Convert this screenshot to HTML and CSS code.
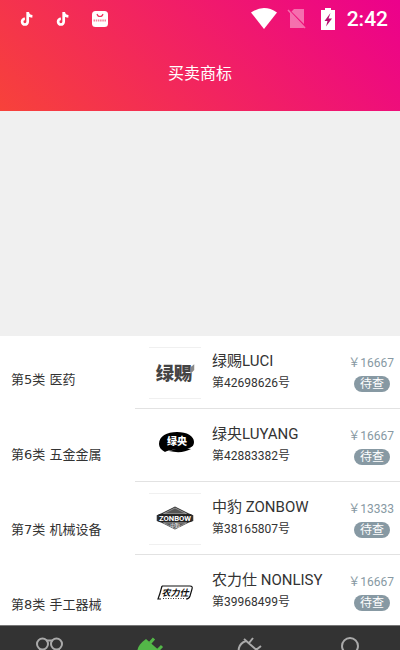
FILE: index.html
```
<!DOCTYPE html>
<html lang="zh-CN">
<head>
<meta charset="utf-8">
<meta name="viewport" content="width=device-width, initial-scale=1">
<title>买卖商标</title>
<link rel="stylesheet" href="styles.css">
</head>
<body>
<svg width="0" height="0" class="sprite" aria-hidden="true">
  <symbol id="note" viewBox="0 0 14 16"><path d="M7.700 1v9.700a2.800 2.800 0 1 1-2.800-2.800M7.700 1.200c.3 2.500 2.100 4 4.700 4.200" fill="none" stroke="#fff" stroke-width="2.700"/></symbol>
</svg>
<header class="header">
  <div class="status">
    <div class="status-left">
      <svg width="14" height="16"><use href="#note"/></svg>
      <svg width="14" height="16"><use href="#note"/></svg>
      <svg width="16" height="16" viewBox="0 0 16 16"><rect width="16" height="16" rx="3.500" fill="#fff"/><path d="M5 3c.8 3.400 5.200 3.400 6 0" fill="none" stroke="#f0305c" stroke-width="1.100"/><path d="M1.500 9.500h13" stroke="#f0305c" stroke-width="2.200" stroke-dasharray="1.500 .7" opacity=".6"/></svg>
    </div>
    <div class="status-right">
      <svg width="26" height="21" viewBox="0 0 26 21"><path d="M0 4.500Q13-4.300 26 4.500L13 21z" fill="#fff"/></svg>
      <svg class="sim" width="20" height="21" viewBox="0 0 20 21"><path d="M7 1h10v15L4.500 3.500zM3 5l14 15H3z" fill="#fff" opacity=".4"/><path d="M1 2l17 18" stroke="#fff" stroke-width="1.500" opacity=".4"/></svg>
      <svg width="14" height="22" viewBox="0 0 14 22"><path d="M4 0h6v2h4v20H0V2h4z" fill="#fff"/><path d="M9.500 5L3.500 13h3L5 18.500l6-8H7.500z" fill="#b80c70"/></svg>
      <span class="time">2:42</span>
    </div>
  </div>
  <h1 class="page-title">买卖商标</h1>
</header>
<main class="content">
  <div class="banner"></div>
  <div class="columns">
    <nav class="categories">
      <a href="#">第5类 医药</a>
      <a href="#">第6类 五金金属</a>
      <a href="#">第7类 机械设备</a>
      <a href="#">第8类 手工器械</a>
    </nav>
    <ul class="marks">
      <li class="mark">
        <svg class="logo framed" viewBox="0 0 52 52"><text x="25" y="33" text-anchor="middle" class="logo-wide">绿赐</text><path d="M42 20l4-3v6l-4 4z" fill="#888"/></svg>
        <div class="info"><h2>绿赐LUCI</h2><p>第42698626号</p></div>
        <div class="offer"><span class="price">￥16667</span><span class="tag">待查</span></div>
      </li>
      <li class="mark">
        <svg class="logo" viewBox="0 0 52 52"><path d="M10 24C10 16 18 12 28 12s17 4 17 10-6 7-13 7c-8 0-14 2-16 3-4-2-6-5-6-8zM20 31q12-4 22-2-9 5-22 2z" fill="#000"/><text x="28" y="25" text-anchor="middle" class="logo-oval">绿央</text></svg>
        <div class="info"><h2>绿央LUYANG</h2><p>第42883382号</p></div>
        <div class="offer"><span class="price">￥16667</span><span class="tag">待查</span></div>
      </li>
      <li class="mark">
        <svg class="logo framed" viewBox="0 0 52 52"><path d="M26 13L40 20l5 2v6l-5 2-14 7-14-7-5-2v-6l5-2z" fill="#333"/><path d="M26 14.500L38 20.500H14zM14 30h24L26 36z" fill="#555" stroke="#ccc" stroke-width=".6"/><rect x="9" y="21" width="34" height="8" fill="#222"/><text x="26" y="28.500" text-anchor="middle" class="logo-badge">ZONBOW</text><text x="26" y="34" text-anchor="middle" class="logo-small">中豹</text></svg>
        <div class="info"><h2>中豹 ZONBOW</h2><p>第38165807号</p></div>
        <div class="offer"><span class="price">￥13333</span><span class="tag">待查</span></div>
      </li>
      <li class="mark">
        <svg class="logo" viewBox="0 0 52 52"><path d="M13 20h28q3 0 2 3l-2 7q-1 3-4 3M13 20q-2 8-4 13h3" fill="none" stroke="#111" stroke-width="1.200"/><text x="26" y="30" text-anchor="middle" class="logo-slant">农力仕</text><path d="M14 32.500h22" stroke="#333" stroke-dasharray="1 1.500"/></svg>
        <div class="info"><h2>农力仕 NONLISY</h2><p>第39968499号</p></div>
        <div class="offer"><span class="price">￥16667</span><span class="tag">待查</span></div>
      </li>
    </ul>
  </div>
</main>
<nav class="tabs">
  <button type="button" aria-label="查询"><svg width="28" height="28" viewBox="0 0 28 28" fill="none" stroke="#aaa" stroke-width="2"><circle cx="6.500" cy="7" r="5.500"/><circle cx="20.500" cy="7" r="5.500"/><path d="M10 3.500h7M4 12l-1 8M23 12l1 8"/></svg></button>
  <button type="button" aria-label="买卖"><svg width="28" height="28" viewBox="0 0 28 28"><path d="M10 2l15 13c-4 7-14 10-20 6S0 9 10 2z" fill="#53b748"/><path d="M14 6l4-4.500M22 13l4-4" stroke="#53b748" stroke-width="3"/></svg></button>
  <button type="button" aria-label="服务"><svg width="28" height="28" viewBox="0 0 28 28" fill="none" stroke="#aaa" stroke-width="2"><path d="M8 2l16 14M10 4C2 7 1 14 5 19s12 3 16-5M13 6l4-5M20 13l5-4"/></svg></button>
  <button type="button" aria-label="我的"><svg width="28" height="28" viewBox="0 0 28 28" fill="none" stroke="#aaa" stroke-width="2"><circle cx="14" cy="9" r="8"/><path d="M4 27c0-6 4-9 10-9s10 3 10 9"/></svg></button>
</nav>
</body>
</html>
```
FILE: styles.css
```
* { box-sizing: border-box; margin: 0; padding: 0; }
body {
  height: 100vh;
  overflow: hidden;
  display: flex;
  flex-direction: column;
  background: #fff;
  color: #333;
  font-family: Roboto, "Noto Sans CJK SC", sans-serif;
}
svg { display: block; flex: none; }
.sprite { position: absolute; }
.header {
  flex: none;
  background: linear-gradient(45deg, #f7423a, #ec008c);
  color: #fff;
}
.status {
  height: 37px;
  display: flex;
  align-items: center;
  justify-content: space-between;
  padding: 0 12px 0 20px;
}
.status-left, .status-right { display: flex; align-items: center; }
.status-left { gap: 22px; }
.status-right { gap: 12px; }
.sim { margin: 0 2px 0 -2px; }
.time { font-size: 21px; line-height: 36px; font-weight: 500; }
.page-title {
  height: 74px;
  line-height: 74px;
  text-align: center;
  font-size: 16px;
  font-weight: 400;
}
.content { flex: 1; min-height: 0; overflow: hidden; }
.banner { height: 225px; background: #f0f0f0; }
.columns { display: grid; grid-template-columns: 135px 1fr; }
.categories { padding-top: 6px; }
.categories a {
  display: block;
  height: 75px;
  line-height: 75px;
  padding-left: 11px;
  font-family: "DejaVu Sans", "Noto Sans CJK SC", sans-serif;
  font-size: 13px;
  color: #333;
  text-decoration: none;
  white-space: nowrap;
}
.marks { list-style: none; }
.mark {
  height: 73px;
  display: flex;
  align-items: center;
  gap: 11px;
  padding: 2px 6px 0 14px;
  border-bottom: 1px solid #e2e2e2;
}
.logo { width: 52px; height: 52px; }
.framed { border: solid #f0f0f0; border-width: 1px 0; }
.info { flex: 1; min-width: 0; white-space: nowrap; }
.info h2 { font-size: 15px; line-height: 22px; font-weight: 400; }
.info p { font-size: 12px; line-height: 22px; }
.info, .offer { padding-bottom: 2px; }
.offer {
  display: flex;
  flex-direction: column;
  align-items: flex-end;
  gap: 4px;
  padding-top: 2px;
}
.price { font-size: 12px; line-height: 18px; color: #8799a3; }
.tag {
  margin-right: 4px;
  padding: 0 6px;
  border-radius: 8px;
  background: #8799a3;
  color: #fff;
  font-size: 12px;
  line-height: 16px;
}
.logo-wide { font-size: 19px; font-weight: 900; fill: #444; }
.logo-oval { font-size: 10px; font-weight: 900; fill: #fff; }
.logo-badge { font-size: 8px; font-weight: 700; fill: #fff; }
.logo-small { font-size: 5px; fill: #fff; }
.logo-slant { font-size: 9px; font-weight: 700; font-style: italic; fill: #111; }
.tabs {
  flex: none;
  height: 25px;
  overflow: hidden;
  display: grid;
  grid-template-columns: repeat(4, 1fr);
  background: #333;
  border-top: 1px solid #777;
}
.tabs button {
  display: flex;
  justify-content: center;
  align-items: flex-start;
  padding-top: 11px;
  border: 0;
  background: none;
}
```
